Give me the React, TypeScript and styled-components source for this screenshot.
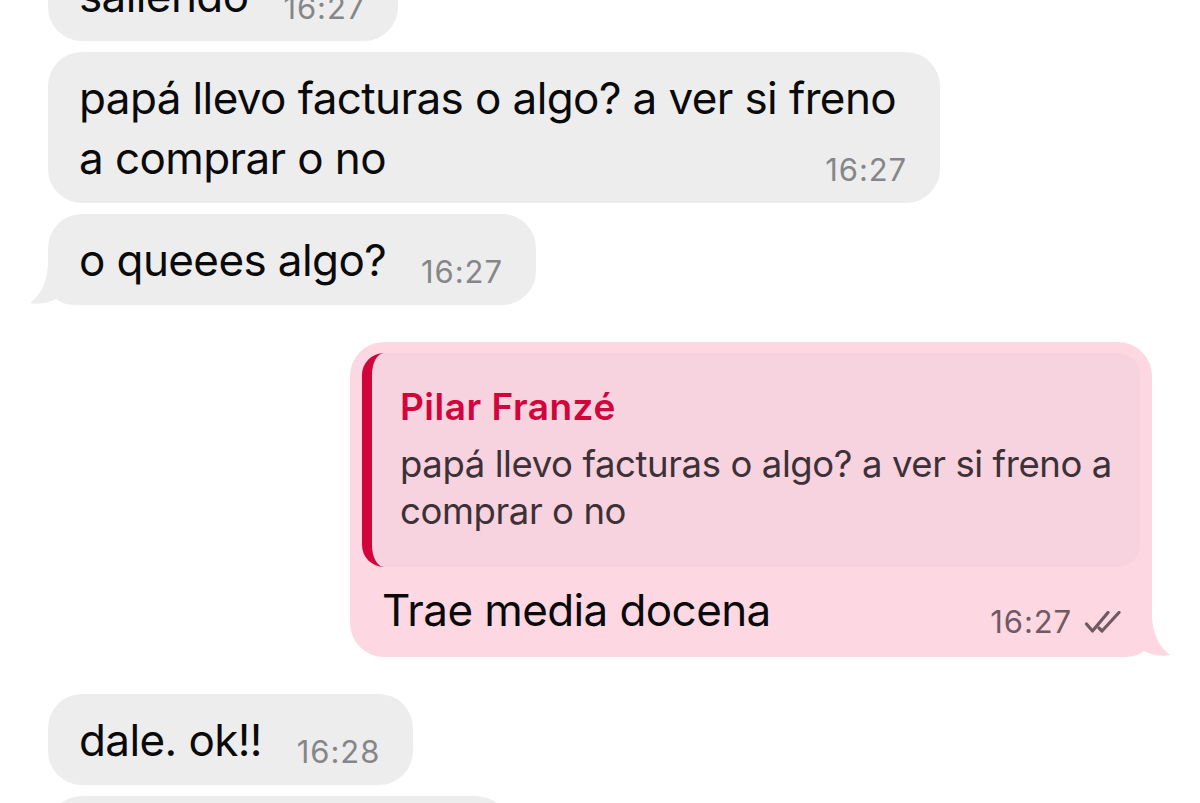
import React from 'react'
import styled, { createGlobalStyle } from 'styled-components'

const colors = {
  page: '#ffffff',
  incoming: '#ededed',
  outgoing: '#fdd8e3',
  quote: '#f6d3de',
  accent: '#d1043c',
  text: '#0a0a0a',
  quoteText: '#3d3137',
  timeIn: '#86868a',
  timeOut: '#6f5a64'
}

const GlobalStyle = createGlobalStyle`
  html, body {
    margin: 0;
    padding: 0;
    background: ${colors.page};
  }

  body {
    height: 803px;
    overflow: hidden;
    font-family: Inter, "Noto Sans", sans-serif;
    color: ${colors.text};
    -webkit-font-smoothing: antialiased;
  }
`

const Thread = styled.div`
  display: flex;
  flex-direction: column;
  gap: 37px;
  padding: 0 48px;
  margin-top: -50px;
`

const Group = styled.div<{ $out?: boolean }>`
  display: flex;
  flex-direction: column;
  align-items: ${(p) => (p.$out ? 'flex-end' : 'flex-start')};
  gap: 11px;
`

const Bubble = styled.div<{ $out?: boolean }>`
  position: relative;
  isolation: isolate;
  box-sizing: border-box;
  max-width: ${(p) => (p.$out ? '802px' : '892px')};
  padding: ${(p) => (p.$out ? '11px 12px 17px' : '16px 33px 15px 31px')};
  border-radius: 34px;
  background: ${(p) => (p.$out ? colors.outgoing : colors.incoming)};
`

const Text = styled.div`
  font-size: 44px;
  line-height: 60px;
  letter-spacing: -0.6px;

  &::after {
    content: '';
    display: block;
    clear: both;
  }
`

const Reply = styled(Text)`
  margin-top: 13px;
  padding: 0 18px 0 20px;
`

const Meta = styled.span<{ $out?: boolean }>`
  float: right;
  display: flex;
  align-items: center;
  gap: 12px;
  margin: 24px 0 0 35px;
  font-size: 31px;
  line-height: 36px;
  letter-spacing: 0.9px;
  color: ${(p) => (p.$out ? colors.timeOut : colors.timeIn)};
`

const Quote = styled.div`
  box-sizing: border-box;
  padding: 31px 20px 32px 28px;
  border-left: 10px solid ${colors.accent};
  border-radius: 22px;
  background: ${colors.quote};
`

const QuoteName = styled.div`
  font-size: 37px;
  line-height: 46px;
  font-weight: 600;
  letter-spacing: 0.5px;
  color: ${colors.accent};
`

const QuoteText = styled.div`
  margin-top: 11px;
  font-size: 36.5px;
  line-height: 47px;
  letter-spacing: -0.4px;
  color: ${colors.quoteText};
`

const TailSvg = styled.svg<{ $out?: boolean }>`
  position: absolute;
  bottom: 0;
  ${(p) => (p.$out ? 'right: -22px; transform: scaleX(-1);' : 'left: -22px;')}
  width: 60px;
  height: 44px;
  z-index: -1;
`

const Ticks = styled.svg`
  width: 38px;
  height: 22px;
  fill: none;
  stroke: ${colors.timeOut};
  stroke-width: 3.2;
  stroke-linecap: round;
  stroke-linejoin: round;
`

function Tail({ out }: { out?: boolean }) {
  return (
    <TailSvg $out={out} viewBox="0 0 60 44">
      <path
        d="M22 0 C22 18 17 32 4 42 C12 44 22 42 30 38 C34 41 40 44 50 44 L60 44 L60 0 Z"
        fill={out ? colors.outgoing : colors.incoming}
      />
    </TailSvg>
  )
}

function DoubleCheck() {
  return (
    <Ticks viewBox="0 0 38 22">
      <path d="M2.5 13 L8.5 20 L24 1.5" />
      <path d="M15 17 L18 20 L35 1.5" />
    </Ticks>
  )
}

interface MessageProps {
  text: string
  time: string
  tail?: boolean
}

function Incoming({ text, time, tail = false }: MessageProps) {
  return (
    <Bubble>
      <Text>
        {text}
        <Meta>{time}</Meta>
      </Text>
      {tail && <Tail />}
    </Bubble>
  )
}

interface OutgoingProps extends MessageProps {
  quoteAuthor: string
  quoteText: string
}

function Outgoing({ text, time, quoteAuthor, quoteText, tail = false }: OutgoingProps) {
  return (
    <Bubble $out>
      <Quote>
        <QuoteName>{quoteAuthor}</QuoteName>
        <QuoteText>{quoteText}</QuoteText>
      </Quote>
      <Reply>
        {text}
        <Meta $out>
          {time}
          <DoubleCheck />
        </Meta>
      </Reply>
      {tail && <Tail out />}
    </Bubble>
  )
}

export default function App() {
  return (
    <>
      <GlobalStyle />
      <Thread>
        <Group>
          <Incoming text="saliendo" time="16:27" />
          <Incoming text="papá llevo facturas o algo? a ver si freno a comprar o no" time="16:27" />
          <Incoming text="o queees algo?" time="16:27" tail />
        </Group>
        <Group $out>
          <Outgoing
            quoteAuthor="Pilar Franzé"
            quoteText="papá llevo facturas o algo? a ver si freno a comprar o no"
            text="Trae media docena"
            time="16:27"
            tail
          />
        </Group>
        <Group>
          <Incoming text="dale. ok!!" time="16:28" />
          <Incoming text="voy para allá!!" time="16:28" />
        </Group>
      </Thread>
    </>
  )
}
